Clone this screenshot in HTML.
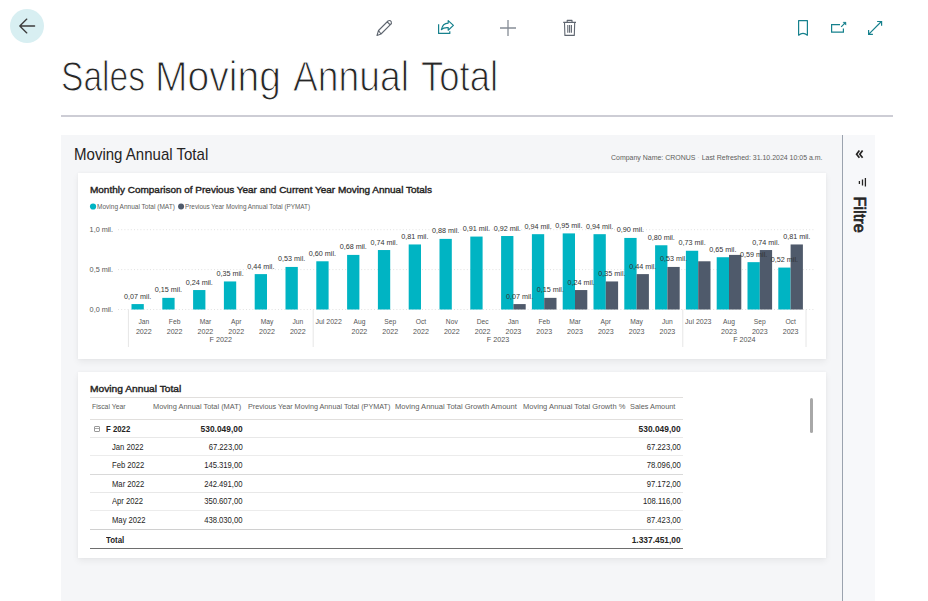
<!DOCTYPE html>
<html><head><meta charset="utf-8">
<style>
html,body{margin:0;padding:0;}
body{width:928px;height:601px;overflow:hidden;position:relative;background:#fff;font-family:"Liberation Sans",sans-serif;}
.a{position:absolute;}
.t{position:absolute;white-space:nowrap;line-height:1;transform-origin:0 0;}
svg{position:absolute;left:0;top:0;}
.tt{position:absolute;white-space:nowrap;line-height:1;top:55px;font-size:42.6px;color:#262626;transform-origin:0 0;-webkit-text-stroke:1.1px #fff;}
.rt{position:absolute;white-space:nowrap;line-height:1;font-size:8.5px;color:#252423;transform-origin:0 0;}
.rr{transform-origin:100% 0;text-align:right;}
.hl{position:absolute;left:90px;width:593px;height:1px;}
</style></head><body>

<div class="a" style="left:10px;top:9px;width:34px;height:34px;border-radius:50%;background:#d8eff2;"></div>
<svg width="928" height="601" style="z-index:2">
 <g fill="none" stroke="#3c3c3c" stroke-width="1.35" stroke-linecap="round" stroke-linejoin="round">
  <path d="M19.8 26 H34.6 M26.8 19.1 L19.8 26 L26.8 32.9"/>
 </g>
 <g fill="none" stroke="#5f6670" stroke-width="1.1" stroke-linejoin="round">
  <path d="M377 35.5 L378.5 30.5 L388 21 Q390 19.8 391.2 21.6 Q392 23.4 390.4 24.6 L381 34 Z M378.5 30.5 L381 34 M387 21.7 L390.3 25"/>
 </g>
 <g fill="none" stroke="#16818d" stroke-width="1.2" stroke-linejoin="round">
  <path d="M438.6 24.2 V33.4 H449.8 V31.2"/>
  <path d="M441.4 29.6 Q442.6 23.2 448.2 23.1 V20.6 L453.4 25.4 L448.2 30.2 V27.6 Q443.6 27.2 441.4 29.6 Z"/>
 </g>
 <g stroke="#868d96" stroke-width="1.3">
  <path d="M508 20 V36 M500 28 H516"/>
 </g>
 <g fill="none" stroke="#5f6670" stroke-width="1.1" stroke-linejoin="round">
  <path d="M563.2 22.4 H576 M567.2 22.4 V20.4 H572 V22.4 M564.5 22.4 L564.9 35.4 H574.3 L574.7 22.4 M567.8 25 V32.8 M569.6 25 V32.8 M571.4 25 V32.8"/>
 </g>
 <g fill="none" stroke="#16818d" stroke-width="1.2" stroke-linejoin="round">
  <path d="M798.6 20.6 H807.4 V35.2 Q803 31.4 798.6 35.2 Z"/>
 </g>
 <g fill="none" stroke="#16818d" stroke-width="1.2">
  <path d="M840 24.6 H831.6 V32.2 H843.4 V28.5"/>
  <path d="M841.2 26.8 L845.6 22.4"/>
  <path d="M843.1 22.3 H845.9 V25.1 Z" fill="#16818d" stroke-width="0.6"/>
 </g>
 <g fill="none" stroke="#16818d" stroke-width="1.2">
  <path d="M868.6 34.3 L881.4 21.5 M877.1 21.5 H881.6 V25.8 M868.6 30 V34.4 H872.9"/>
 </g>
</svg>

<div class="tt" style="left:60.5px;transform:scaleX(0.789)">Sales</div>
<div class="tt" style="left:155.3px;transform:scaleX(0.917)">Moving</div>
<div class="tt" style="left:292.9px;transform:scaleX(0.875)">Annual</div>
<div class="tt" style="left:420.5px;transform:scaleX(0.857)">Total</div>
<div class="a" style="left:61px;top:115px;width:832px;height:2px;background:#cdcdd5"></div>

<div class="a" style="left:61px;top:135px;width:814px;height:466px;background:#f5f6f8"></div>
<div class="a" style="left:843px;top:135px;width:32px;height:466px;background:#f7f8fa"></div>
<div class="a" style="left:842px;top:135px;width:1.2px;height:466px;background:#9ba3ae"></div>
<div class="t" style="left:73.60px;top:146.61px;font-size:15.7px;transform:scaleX(0.958);color:#252423">Moving Annual Total</div>
<div class="t" style="left:610.90px;top:153.82px;font-size:7.3px;transform:scaleX(0.955);color:#605e5c">Company Name: CRONUS <span style='color:#c8c8c8'>·</span> Last Refreshed: 31.10.2024 10:05 a.m.</div>

<div class="a" style="left:78px;top:172.5px;width:748px;height:186px;background:#fff;box-shadow:0 3px 7px rgba(0,0,0,0.06),0 0 3px rgba(0,0,0,0.04)"></div>
<div class="a" style="left:78px;top:371.5px;width:748px;height:186px;background:#fff;box-shadow:0 3px 7px rgba(0,0,0,0.06),0 0 3px rgba(0,0,0,0.04)"></div>

<svg width="928" height="601" style="z-index:2">
 <g fill="none" stroke="#252423" stroke-width="1.7" stroke-linejoin="miter">
  <path d="M859.4 150.6 L856.6 154.2 L859.4 157.8 M862.6 150.6 L859.8 154.2 L862.6 157.8"/>
 </g>
 <g stroke="#252423" stroke-width="1.3">
  <path d="M865.4 178 V186.6 M862.5 179.5 V185.4 M859.4 181 V184"/>
 </g>
 <text transform="translate(854.3,196.6) rotate(90) scale(0.96,1)" font-family="Liberation Sans" font-weight="400" font-size="17" fill="#252423" stroke="#252423" stroke-width="0.7">Filtre</text>
</svg>

<div class="t" style="left:90.30px;top:184.69px;font-size:9.7px;transform:scaleX(1.03);font-weight:400;color:#252423;-webkit-text-stroke:0.4px #252423">Monthly Comparison of Previous Year and Current Year Moving Annual Totals</div>
<div class="t" style="left:96.90px;top:202.97px;font-size:7px;transform:scaleX(0.934);color:#605e5c">Moving Annual Total (MAT)</div>
<div class="t" style="left:184.70px;top:202.97px;font-size:7px;transform:scaleX(0.907);color:#605e5c">Previous Year Moving Annual Total (PYMAT)</div>
<svg width="928" height="601" style="z-index:1">
 <circle cx="93.05" cy="206.5" r="3.1" fill="#00b4c3"/>
 <circle cx="181.05" cy="206.5" r="3.0" fill="#4f5a6b"/>
 <g stroke="#e2e2e2" stroke-width="1" stroke-dasharray="1 2.2">
  <path d="M118 229.7 H815 M118 269.6 H815 M118 309.5 H815"/>
 </g>
 <g font-family="Liberation Sans" font-size="7.2" fill="#555555" text-anchor="end">
  <text transform="translate(113,231.85) scale(1.01,1)">1,0 mil.</text>
  <text transform="translate(113,271.75) scale(1.01,1)">0,5 mil.</text>
  <text transform="translate(113,311.65) scale(1.01,1)">0,0 mil.</text>
 </g>
 <g stroke="#e6e6e6" stroke-width="1">
  <path d="M128.4 309.5 V347 M313.2 309.5 V347 M682.8 309.5 V347 M806.0 309.5 V347"/>
 </g>
 <rect x="131.50" y="304.08" width="12.3" height="5.42" fill="#00b4c3"/>
<rect x="162.30" y="297.86" width="12.3" height="11.64" fill="#00b4c3"/>
<rect x="193.10" y="290.05" width="12.3" height="19.45" fill="#00b4c3"/>
<rect x="223.90" y="281.45" width="12.3" height="28.05" fill="#00b4c3"/>
<rect x="254.70" y="274.11" width="12.3" height="35.39" fill="#00b4c3"/>
<rect x="285.50" y="266.94" width="12.3" height="42.56" fill="#00b4c3"/>
<rect x="316.30" y="261.28" width="12.3" height="48.22" fill="#00b4c3"/>
<rect x="347.10" y="254.91" width="12.3" height="54.59" fill="#00b4c3"/>
<rect x="377.90" y="250.04" width="12.3" height="59.46" fill="#00b4c3"/>
<rect x="408.70" y="244.46" width="12.3" height="65.04" fill="#00b4c3"/>
<rect x="439.50" y="238.89" width="12.3" height="70.61" fill="#00b4c3"/>
<rect x="470.30" y="236.57" width="12.3" height="72.93" fill="#00b4c3"/>
<rect x="501.10" y="236.02" width="12.3" height="73.48" fill="#00b4c3"/>
<rect x="513.40" y="304.08" width="12.3" height="5.42" fill="#4f5a6b"/>
<rect x="531.90" y="234.18" width="12.3" height="75.32" fill="#00b4c3"/>
<rect x="544.20" y="297.86" width="12.3" height="11.64" fill="#4f5a6b"/>
<rect x="562.70" y="233.39" width="12.3" height="76.11" fill="#00b4c3"/>
<rect x="575.00" y="290.05" width="12.3" height="19.45" fill="#4f5a6b"/>
<rect x="593.50" y="234.18" width="12.3" height="75.32" fill="#00b4c3"/>
<rect x="605.80" y="281.45" width="12.3" height="28.05" fill="#4f5a6b"/>
<rect x="624.30" y="237.93" width="12.3" height="71.57" fill="#00b4c3"/>
<rect x="636.60" y="274.11" width="12.3" height="35.39" fill="#4f5a6b"/>
<rect x="655.10" y="245.26" width="12.3" height="64.24" fill="#00b4c3"/>
<rect x="667.40" y="266.94" width="12.3" height="42.56" fill="#4f5a6b"/>
<rect x="685.90" y="250.76" width="12.3" height="58.74" fill="#00b4c3"/>
<rect x="698.20" y="261.28" width="12.3" height="48.22" fill="#4f5a6b"/>
<rect x="716.70" y="257.22" width="12.3" height="52.28" fill="#00b4c3"/>
<rect x="729.00" y="254.91" width="12.3" height="54.59" fill="#4f5a6b"/>
<rect x="747.50" y="262.16" width="12.3" height="47.34" fill="#00b4c3"/>
<rect x="759.80" y="250.04" width="12.3" height="59.46" fill="#4f5a6b"/>
<rect x="778.30" y="267.58" width="12.3" height="41.92" fill="#00b4c3"/>
<rect x="790.60" y="244.46" width="12.3" height="65.04" fill="#4f5a6b"/>
 <g font-family="Liberation Sans" font-size="7.2" fill="#333333" text-anchor="middle">
 <text transform="translate(137.65,298.58) scale(1.0,1)">0,07 mil.</text>
<text transform="translate(168.45,292.36) scale(1.0,1)">0,15 mil.</text>
<text transform="translate(199.25,284.55) scale(1.0,1)">0,24 mil.</text>
<text transform="translate(230.05,275.95) scale(1.0,1)">0,35 mil.</text>
<text transform="translate(260.85,268.61) scale(1.0,1)">0,44 mil.</text>
<text transform="translate(291.65,261.44) scale(1.0,1)">0,53 mil.</text>
<text transform="translate(322.45,255.78) scale(1.0,1)">0,60 mil.</text>
<text transform="translate(353.25,249.41) scale(1.0,1)">0,68 mil.</text>
<text transform="translate(384.05,244.54) scale(1.0,1)">0,74 mil.</text>
<text transform="translate(414.85,238.96) scale(1.0,1)">0,81 mil.</text>
<text transform="translate(445.65,233.39) scale(1.0,1)">0,88 mil.</text>
<text transform="translate(476.45,231.07) scale(1.0,1)">0,91 mil.</text>
<text transform="translate(507.25,230.52) scale(1.0,1)">0,92 mil.</text>
<text transform="translate(519.55,298.58) scale(1.0,1)">0,07 mil.</text>
<text transform="translate(538.05,228.68) scale(1.0,1)">0,94 mil.</text>
<text transform="translate(550.35,292.36) scale(1.0,1)">0,15 mil.</text>
<text transform="translate(568.85,227.89) scale(1.0,1)">0,95 mil.</text>
<text transform="translate(581.15,284.55) scale(1.0,1)">0,24 mil.</text>
<text transform="translate(599.65,228.68) scale(1.0,1)">0,94 mil.</text>
<text transform="translate(611.95,275.95) scale(1.0,1)">0,35 mil.</text>
<text transform="translate(630.45,232.43) scale(1.0,1)">0,90 mil.</text>
<text transform="translate(642.75,268.61) scale(1.0,1)">0,44 mil.</text>
<text transform="translate(661.25,239.76) scale(1.0,1)">0,80 mil.</text>
<text transform="translate(673.55,261.44) scale(1.0,1)">0,53 mil.</text>
<text transform="translate(692.05,245.26) scale(1.0,1)">0,73 mil.</text>
<text transform="translate(722.85,251.72) scale(1.0,1)">0,65 mil.</text>
<text transform="translate(753.65,256.66) scale(1.0,1)">0,59 mil.</text>
<text transform="translate(765.95,244.54) scale(1.0,1)">0,74 mil.</text>
<text transform="translate(784.45,262.08) scale(1.0,1)">0,52 mil.</text>
<text transform="translate(796.75,238.96) scale(1.0,1)">0,81 mil.</text>
 </g>
 <g font-family="Liberation Sans" font-size="7.2" fill="#555555" text-anchor="middle">
 <text transform="translate(143.80,324.2) scale(0.93,1)">Jan</text><text transform="translate(143.80,334) scale(0.99,1)">2022</text>
<text transform="translate(174.60,324.2) scale(0.93,1)">Feb</text><text transform="translate(174.60,334) scale(0.99,1)">2022</text>
<text transform="translate(205.40,324.2) scale(0.93,1)">Mar</text><text transform="translate(205.40,334) scale(0.99,1)">2022</text>
<text transform="translate(236.20,324.2) scale(0.93,1)">Apr</text><text transform="translate(236.20,334) scale(0.99,1)">2022</text>
<text transform="translate(267.00,324.2) scale(0.93,1)">May</text><text transform="translate(267.00,334) scale(0.99,1)">2022</text>
<text transform="translate(297.80,324.2) scale(0.93,1)">Jun</text><text transform="translate(297.80,334) scale(0.99,1)">2022</text>
<text transform="translate(328.60,324.2) scale(0.97,1)">Jul 2022</text>
<text transform="translate(359.40,324.2) scale(0.93,1)">Aug</text><text transform="translate(359.40,334) scale(0.99,1)">2022</text>
<text transform="translate(390.20,324.2) scale(0.93,1)">Sep</text><text transform="translate(390.20,334) scale(0.99,1)">2022</text>
<text transform="translate(421.00,324.2) scale(0.93,1)">Oct</text><text transform="translate(421.00,334) scale(0.99,1)">2022</text>
<text transform="translate(451.80,324.2) scale(0.93,1)">Nov</text><text transform="translate(451.80,334) scale(0.99,1)">2022</text>
<text transform="translate(482.60,324.2) scale(0.93,1)">Dec</text><text transform="translate(482.60,334) scale(0.99,1)">2022</text>
<text transform="translate(513.40,324.2) scale(0.93,1)">Jan</text><text transform="translate(513.40,334) scale(0.99,1)">2023</text>
<text transform="translate(544.20,324.2) scale(0.93,1)">Feb</text><text transform="translate(544.20,334) scale(0.99,1)">2023</text>
<text transform="translate(575.00,324.2) scale(0.93,1)">Mar</text><text transform="translate(575.00,334) scale(0.99,1)">2023</text>
<text transform="translate(605.80,324.2) scale(0.93,1)">Apr</text><text transform="translate(605.80,334) scale(0.99,1)">2023</text>
<text transform="translate(636.60,324.2) scale(0.93,1)">May</text><text transform="translate(636.60,334) scale(0.99,1)">2023</text>
<text transform="translate(667.40,324.2) scale(0.93,1)">Jun</text><text transform="translate(667.40,334) scale(0.99,1)">2023</text>
<text transform="translate(698.20,324.2) scale(0.97,1)">Jul 2023</text>
<text transform="translate(729.00,324.2) scale(0.93,1)">Aug</text><text transform="translate(729.00,334) scale(0.99,1)">2023</text>
<text transform="translate(759.80,324.2) scale(0.93,1)">Sep</text><text transform="translate(759.80,334) scale(0.99,1)">2023</text>
<text transform="translate(790.60,324.2) scale(0.93,1)">Oct</text><text transform="translate(790.60,334) scale(0.99,1)">2023</text>
 <text x="220.80" y="341.9">F 2022</text>
 <text x="498.00" y="341.9">F 2023</text>
 <text x="744.40" y="341.9">F 2024</text>
 </g>
</svg>

<div class="t" style="left:90.40px;top:383.64px;font-size:9.7px;transform:scaleX(1.055);font-weight:400;color:#252423;-webkit-text-stroke:0.4px #252423">Moving Annual Total</div>
<div class="hl" style="top:397px;background:#e1dfdd"></div>
<div class="hl" style="top:418.5px;background:#e1dfdd"></div>
<div class="t" style="left:92.20px;top:403.99px;font-size:7.1px;transform:scaleX(0.97);color:#605e5c">Fiscal Year</div>
<div class="t" style="left:153.10px;top:403.99px;font-size:7.1px;transform:scaleX(1.043);color:#605e5c">Moving Annual Total (MAT)</div>
<div class="t" style="left:247.60px;top:403.99px;font-size:7.1px;transform:scaleX(1.019);color:#605e5c">Previous Year Moving Annual Total (PYMAT)</div>
<div class="t" style="left:395.00px;top:403.99px;font-size:7.1px;transform:scaleX(1.067);color:#605e5c">Moving Annual Total Growth Amount</div>
<div class="t" style="left:522.60px;top:403.99px;font-size:7.1px;transform:scaleX(1.061);color:#605e5c">Moving Annual Total Growth %</div>
<div class="t" style="left:630.20px;top:403.99px;font-size:7.1px;transform:scaleX(1.037);color:#605e5c">Sales Amount</div>

<div class="a" style="left:93.7px;top:426px;width:6px;height:6px;border:0.8px solid #999;border-radius:1px;box-sizing:border-box"></div>
<div class="a" style="left:95.3px;top:428.3px;width:3.4px;height:0.8px;background:#aaa"></div>
<div class="rt" style="left:106.1px;top:424.80px;font-weight:700;transform:scaleX(0.915)">F 2022</div>
<div class="rt rr" style="right:685.40px;top:424.80px;font-weight:700;transform:scaleX(0.986)">530.049,00</div>
<div class="rt rr" style="right:247.30px;top:424.80px;font-weight:700;transform:scaleX(0.986)">530.049,00</div>
<div class="hl" style="top:436.7px;background:#e8e8e8"></div>
<div class="hl" style="top:455.2px;background:#ececec"></div>
<div class="hl" style="top:473.8px;background:#d9d9d9"></div>
<div class="hl" style="top:492px;background:#e8e8e8"></div>
<div class="hl" style="top:510.2px;background:#ececec"></div>
<div class="hl" style="top:528.6px;background:#d0d0d0"></div>
<div class="hl" style="top:547.8px;height:1.2px;background:#6e6e6e"></div>
<div class="rt" style="left:112px;top:442.70px;transform:scaleX(0.90)">Jan 2022</div>
<div class="rt rr" style="right:685.40px;top:442.70px;transform:scaleX(0.903)">67.223,00</div>
<div class="rt rr" style="right:247.30px;top:442.70px;transform:scaleX(0.903)">67.223,00</div>
<div class="rt" style="left:112px;top:461.20px;transform:scaleX(0.90)">Feb 2022</div>
<div class="rt rr" style="right:685.40px;top:461.20px;transform:scaleX(0.903)">145.319,00</div>
<div class="rt rr" style="right:247.30px;top:461.20px;transform:scaleX(0.903)">78.096,00</div>
<div class="rt" style="left:112px;top:479.60px;transform:scaleX(0.90)">Mar 2022</div>
<div class="rt rr" style="right:685.40px;top:479.60px;transform:scaleX(0.903)">242.491,00</div>
<div class="rt rr" style="right:247.30px;top:479.60px;transform:scaleX(0.903)">97.172,00</div>
<div class="rt" style="left:112px;top:497.40px;transform:scaleX(0.90)">Apr 2022</div>
<div class="rt rr" style="right:685.40px;top:497.40px;transform:scaleX(0.903)">350.607,00</div>
<div class="rt rr" style="right:247.30px;top:497.40px;transform:scaleX(0.903)">108.116,00</div>
<div class="rt" style="left:112px;top:516.00px;transform:scaleX(0.90)">May 2022</div>
<div class="rt rr" style="right:685.40px;top:516.00px;transform:scaleX(0.903)">438.030,00</div>
<div class="rt rr" style="right:247.30px;top:516.00px;transform:scaleX(0.903)">87.423,00</div>
<div class="rt" style="left:105.5px;top:535.50px;font-weight:700;transform:scaleX(0.93)">Total</div>
<div class="rt rr" style="right:247.30px;top:535.50px;font-weight:700;transform:scaleX(0.986)">1.337.451,00</div>
<div class="a" style="left:810.2px;top:398px;width:3.2px;height:35px;border-radius:1.6px;background:#a8a8a8"></div>

</body></html>
